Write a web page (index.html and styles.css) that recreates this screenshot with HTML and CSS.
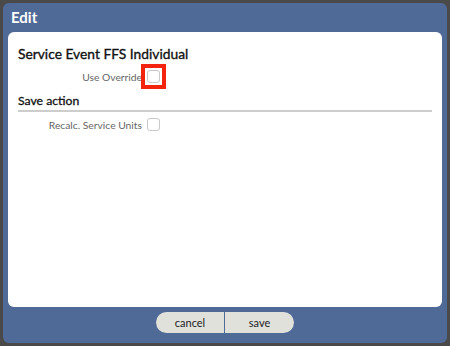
FILE: index.html
```html
<!DOCTYPE html>
<html lang="en">
<head>
  <meta charset="UTF-8" />
  <meta name="viewport" content="width=device-width, initial-scale=1.0"/>
  <title>Edit</title>
  <link rel="stylesheet" href="styles.css">
</head>
<body>

  <div class="dialog">
    <div class="dialog-title">Edit</div>

    <div class="dialog-body">
      <h2>Service Event FFS Individual</h2>
      <div class="field">
        <span class="field-label">Use Override</span>
        <span class="check-wrap highlight"><input type="checkbox" /></span>
      </div>

      <h3>Save action</h3>
      <div class="field">
        <span class="field-label">Recalc. Service Units</span>
        <span class="check-wrap"><input type="checkbox" /></span>
      </div>
    </div>

    <div class="dialog-buttons">
      <button class="btn btn-left">cancel</button>
      <button class="btn btn-right">save</button>
    </div>
  </div>

</body>
</html>
```

FILE: styles.css
```css
body {
  margin: 0;
  background: #4a4a4a;
  font-family: Lato, "Open Sans", sans-serif;
}
.dialog {
  margin: 3px;
  width: 444px;
  height: 340px;
  background: #506a97;
  border-radius: 6px;
  display: flex;
  flex-direction: column;
}
.dialog-title {
  height: 29px;
  padding-left: 8px;
  color: #fff;
  font-size: 15px;
  font-weight: bold;
  line-height: 29px;
}
.dialog-body {
  margin: 0 5px;
  height: 275px;
  background: #fff;
  border-radius: 6px;
  padding: 11px 10px 0 10px;
  box-sizing: border-box;
}
h2 {
  margin: 0;
  font-size: 13.8px;
  line-height: 21px;
  font-weight: normal;
  color: #111;
  -webkit-text-stroke: 0.35px #111;
}
h3 {
  margin: 4px 0 0;
  font-size: 12.2px;
  line-height: 16px;
  font-weight: normal;
  color: #111;
  -webkit-text-stroke: 0.3px #111;
  border-bottom: 2px solid #cdcdcd;
  padding-bottom: 1px;
}
.field {
  display: flex;
  align-items: center;
  height: 25px;
}
.field-label {
  width: 124px;
  text-align: right;
  font-size: 10.3px;
  color: #666;
}
.check-wrap {
  display: inline-flex;
  padding: 2px;
  border: 4px solid transparent;
  margin-left: -1px;
}
.check-wrap.highlight {
  border-color: #f4230e;
}
input[type="checkbox"] {
  appearance: none;
  margin: 0;
  width: 13px;
  height: 13px;
  border: 1px solid #c8c8c8;
  border-radius: 3px;
  background: #fff;
}
.dialog-buttons {
  display: flex;
  justify-content: center;
  padding-top: 5px;
}
.btn {
  width: 69px;
  height: 21px;
  border: none;
  background: #e1e1dc;
  font-family: Lato, "Open Sans", sans-serif;
  font-size: 11px;
  color: #222;
  padding: 0;
}
.btn-left {
  border-radius: 11px 0 0 11px;
  border-right: 1px solid #506a97;
}
.btn-right {
  border-radius: 0 11px 11px 0;
}
```
